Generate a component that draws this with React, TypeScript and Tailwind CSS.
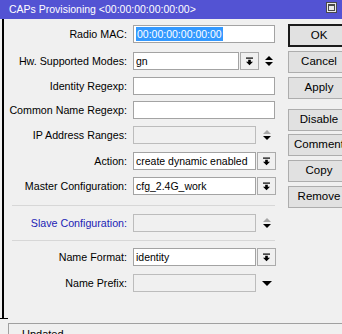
import React from "react";

const FONT = { fontFamily: '"Liberation Sans", Arial, sans-serif' };

function DropIcon() {
  return (
    <svg width="9" height="9" viewBox="0 0 9 9">
      <rect x="1" y="0.5" width="7" height="1.2" fill="#000" />
      <path d="M3.2 2.8 H5.8 V4.8 H8 L4.5 8.3 L1 4.8 H3.2 Z" fill="#000" />
    </svg>
  );
}

function UpDown({ upDisabled = false }: { upDisabled?: boolean }) {
  return (
    <svg width="10" height="12" viewBox="0 0 10 12">
      <path d="M1 5 L5 1 L9 5 Z" fill={upDisabled ? "#a6a6a6" : "#000"} />
      <path d="M1 7 L9 7 L5 11 Z" fill="#000" />
    </svg>
  );
}

function DownOnly() {
  return (
    <svg width="12" height="7" viewBox="0 0 12 7">
      <path d="M1 1 L11 1 L6 6 Z" fill="#000" />
    </svg>
  );
}

interface RowProps {
  label: string;
  className?: string;
  blue?: boolean;
  children: React.ReactNode;
}

function Row({ label, className = "", blue = false, children }: RowProps) {
  return (
    <div className={`flex h-[18px] items-center ${className}`}>
      <div
        className={`w-[123px] shrink-0 whitespace-nowrap text-right text-[10.7px] leading-none ${
          blue ? "text-[#2323b5]" : "text-black"
        }`}
      >
        {label}
      </div>
      <div className="ml-[6px] flex h-full items-center">{children}</div>
    </div>
  );
}

function Field({
  w,
  value = "",
  disabled = false,
}: {
  w: string;
  value?: React.ReactNode;
  disabled?: boolean;
}) {
  return (
    <div
      className={`flex h-[18px] items-center overflow-hidden whitespace-nowrap border pl-[2px] text-[10.5px] leading-none text-black ${w} ${
        disabled ? "border-[#bcbcbc] bg-[#f0f0f0]" : "border-[#a3a3a3] bg-white"
      }`}
    >
      {value}
    </div>
  );
}

function DropBtn() {
  return (
    <div className="ml-px flex h-[18px] w-[19px] items-center justify-center border border-[#ababab] bg-[#f0f0f0]">
      <DropIcon />
    </div>
  );
}

function Btn({ label, primary = false, className = "" }: { label: string; primary?: boolean; className?: string }) {
  return (
    <div
      className={`flex h-[22px] w-[62px] shrink-0 items-center justify-center bg-[#e1e1e1] text-[11.5px] leading-none text-black ${
        primary ? "h-[23px] border-2 border-[#1b1b1b]" : "border border-[#adadad]"
      } ${className}`}
    >
      {label}
    </div>
  );
}

function Separator({ className = "" }: { className?: string }) {
  return <div className={`ml-[8px] h-px w-[263px] bg-[#d7d7d7] ${className}`} />;
}

export default function App() {
  return (
    <div className="relative h-[334px] w-[342px] overflow-hidden bg-[#f0f0f0]" style={FONT}>
      {/* Title bar */}
      <div className="flex h-[19px] items-center bg-[#5353d3] pl-[9px] pr-[4px]">
        <span className="whitespace-nowrap text-[10.5px] leading-none text-white">
          CAPs Provisioning &lt;00:00:00:00:00:00&gt;
        </span>
        <div className="ml-auto mb-[4px] mr-[1px] flex h-[11px] w-[11px] items-center justify-center border border-[#4a4a4a] bg-[#e9e9e9]">
          <div className="h-[7px] w-[7px] border border-[#4a4a4a] border-t-2" />
        </div>
      </div>

      {/* Body */}
      <div className="ml-[2px] flex h-[299px] border-l-2 border-black">
        {/* Form */}
        <div className="flex w-[284px] shrink-0 flex-col">
          <Row label="Radio MAC:" className="mt-[6px]">
            <Field
              w="w-[142px]"
              value={<span className="bg-[#3399ff] px-px py-[2px] text-white">00:00:00:00:00:00</span>}
            />
          </Row>
          <Row label="Hw. Supported Modes:" className="mt-[9px]">
            <Field w="w-[106px]" value="gn" />
            <DropBtn />
            <div className="ml-[4px] flex w-[12px] justify-center">
              <UpDown />
            </div>
          </Row>
          <Row label="Identity Regexp:" className="mt-[7px]">
            <Field w="w-[142px]" />
          </Row>
          <Row label="Common Name Regexp:" className="mt-[6px]">
            <Field w="w-[142px]" />
          </Row>
          <Row label="IP Address Ranges:" className="mt-[7px]">
            <Field w="w-[123px]" disabled />
            <div className="ml-[5px] flex w-[12px] justify-center">
              <UpDown upDisabled />
            </div>
          </Row>
          <Row label="Action:" className="mt-[8px]">
            <Field w="w-[123px]" value="create dynamic enabled" />
            <DropBtn />
          </Row>
          <Row label="Master Configuration:" className="mt-[7px]">
            <Field w="w-[123px]" value="cfg_2.4G_work" />
            <DropBtn />
          </Row>
          <Separator className="mt-[10px]" />
          <Row label="Slave Configuration:" className="mt-[8px]" blue>
            <Field w="w-[123px]" disabled />
            <div className="ml-[5px] flex w-[12px] justify-center">
              <UpDown upDisabled />
            </div>
          </Row>
          <Separator className="mt-[8px]" />
          <Row label="Name Format:" className="mt-[7px]">
            <Field w="w-[123px]" value="identity" />
            <DropBtn />
          </Row>
          <Row label="Name Prefix:" className="mt-[8px]">
            <Field w="w-[123px]" disabled />
            <div className="ml-[5px] flex w-[12px] justify-center">
              <DownOnly />
            </div>
          </Row>
        </div>

        {/* Buttons */}
        <div className="flex flex-col">
          <Btn label="OK" primary className="mt-[5px]" />
          <Btn label="Cancel" className="mt-[4px]" />
          <Btn label="Apply" className="mt-[4px]" />
          <Btn label="Disable" className="mt-[10px]" />
          <Btn label="Comment" className="mt-[3px]" />
          <Btn label="Copy" className="mt-[4px]" />
          <Btn label="Remove" className="mt-[4px]" />
        </div>
      </div>

      {/* Bottom edge */}
      <div className="h-px w-[8px] bg-black" />
      <div className="ml-[8px] mt-[4px] h-[20px] border-l border-t border-[#a0a0a0] pl-[13px] pt-[5px] text-[11px] leading-none text-black">
        Updated
      </div>
    </div>
  );
}
